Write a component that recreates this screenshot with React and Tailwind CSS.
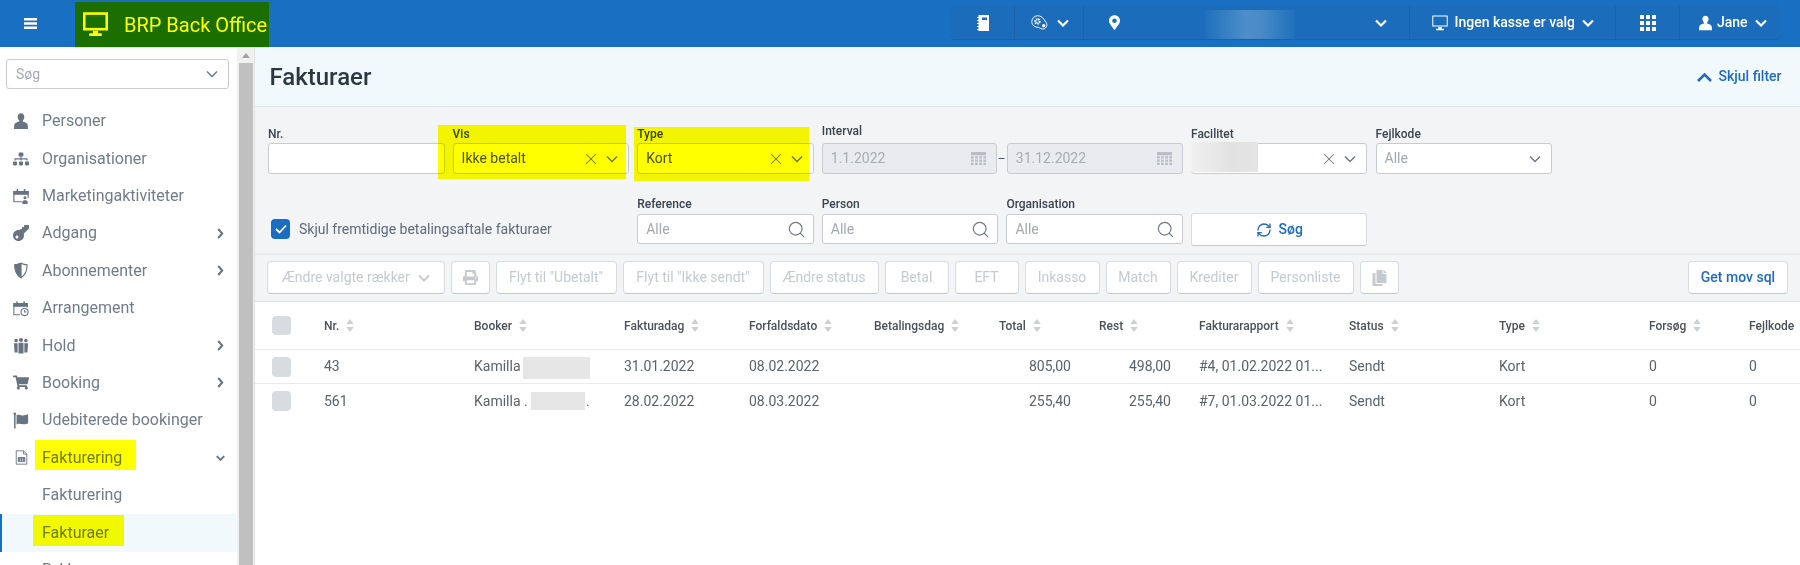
import React from "react";
import { X, Search, RefreshCw } from "lucide-react";
import { FaSitemap, FaKey, FaShoppingCart, FaPrint, FaCopy, FaMapMarkerAlt } from "react-icons/fa";

const ChevD = ({ className = "", sw = 1.500 }) => (
  <svg viewBox="0 0 12 8" className={`w-[12px] h-[8px] shrink-0 ${className}`} fill="none" stroke="currentColor" strokeWidth={sw}><path d="M1 1.500l5 5 5-5" /></svg>
);
const ChevR = ({ className = "" }) => (
  <svg viewBox="0 0 7 11" className={`w-[7px] h-[11px] shrink-0 ${className}`} fill="none" stroke="currentColor" strokeWidth="2"><path d="M1.200 1l4 4.500-4 4.500" /></svg>
);
const IconUser = ({ className }) => (
  <svg viewBox="0 0 16 18" className={className} fill="currentColor"><path d="M8 0c2.400 0 3.800 1.800 3.800 4.200 0 1.800-.7 3.300-1.800 4.200v1.300c2.600.7 5.200 1.700 5.700 3.600L16 18H0l.3-4.700c.5-1.900 3.100-2.900 5.700-3.600V8.400C4.900 7.500 4.200 6 4.200 4.200 4.200 1.800 5.600 0 8 0z" /></svg>
);
const IconCalPerson = ({ className }) => (
  <svg viewBox="0 0 18 18" className={className} fill="none" stroke="currentColor" strokeWidth="1.300"><path d="M10 15.500H1V4h16v7" /><path d="M1 4h16v3H1z" fill="currentColor" /><path d="M5 1v4M13 1v4" strokeWidth="1.800" /><circle cx="13.500" cy="11" r="1.700" fill="currentColor" stroke="none" /><path d="M10.500 18v-2.500c0-1 1.500-1.700 3-1.700s3 .7 3 1.700V18z" fill="currentColor" stroke="none" /></svg>
);
const IconCalClock = ({ className }) => (
  <svg viewBox="0 0 18 18" className={className} fill="none" stroke="currentColor" strokeWidth="1.200"><path d="M8 16H1V3.500h15V8" /><path d="M1 3.500h15v3H1z" fill="currentColor" /><path d="M4.500 1v4M12.500 1v4" strokeWidth="1.800" /><circle cx="13" cy="13" r="4" fill="#fff" /><path d="M13 10.800V13h2" /></svg>
);
const IconShield = ({ className }) => (
  <svg viewBox="0 0 16 18" className={className} fill="none" stroke="currentColor" strokeWidth="1.300"><path d="M1 2.500C3.500 2.500 6 1.800 8 .8c2 1 4.500 1.700 7 1.700 0 7-1.500 11.500-7 14.700C2.500 14 1 9.500 1 2.500z" /><path d="M1 2.500C3.500 2.500 6 1.800 8 .8v16.400C2.500 14 1 9.500 1 2.500z" fill="currentColor" /></svg>
);
const IconTeam = ({ className }) => (
  <svg viewBox="0 0 18 18" className={className} fill="currentColor"><circle cx="3.500" cy="3.500" r="2" /><circle cx="9" cy="2.800" r="2.300" /><circle cx="14.500" cy="3.500" r="2" /><path d="M1 6.500h4.200V17H1.800zM6.200 6h5.600v12H6.200zM12.800 6.500H17l-.8 10.500h-3.400z" /></svg>
);
const IconFlag = ({ className }) => (
  <svg viewBox="0 0 18 18" className={className} fill="currentColor"><path d="M1.200 1h1.700v17H1.200z" /><circle cx="2" cy="1.500" r="1.500" /><path d="M4 3c3-1.500 5.500 1 9 .2 1.500-.3 3-.8 4-1.200v10c-1 .6-2.500 1-4 1.200-3.500.5-6-1.500-9 .2z" /></svg>
);
const IconInvoice = ({ className }) => (
  <svg viewBox="0 0 16 18" className={className} fill="none" stroke="currentColor" strokeWidth="1.100"><path d="M1.500.8h9l4 4v12.400h-13z" /><path d="M10.500.8v4h4" /><path d="M4 9h8v5H4z" fill="currentColor" /><path d="M6.500 10v4M9.500 10v4" stroke="#fff" strokeWidth=".8" /></svg>
);
const IconCalendarGrid = () => (
  <svg viewBox="0 0 14 14" className="w-[15px] h-[15px] text-[#b8bdc3]" fill="currentColor"><path d="M0 1h14v3H0z" /><path d="M0 5h2.500v2H0zM3.800 5h2.500v2H3.800zM7.700 5h2.500v2H7.700zM11.500 5H14v2h-2.500zM0 8h2.500v2H0zM3.800 8h2.500v2H3.800zM7.700 8h2.500v2H7.700zM11.500 8H14v2h-2.500zM0 11h2.500v2H0zM3.800 11h2.500v2H3.800zM7.700 11h2.500v2H7.700zM11.500 11H14v2h-2.500z" /></svg>
);
const IconMonitor = ({ className, strokeW = 1.500 }) => (
  <svg viewBox="0 0 24 24" className={className} fill="none"><rect x="1.200" y="1.500" width="21.600" height="15" stroke="currentColor" strokeWidth={strokeW} /><path d="M9.500 18h5v2.500h3.500V23H6v-2.500h3.500z" fill="currentColor" /></svg>
);
const IconNotebook = ({ className }) => (
  <svg viewBox="0 0 12 16" className={className} fill="currentColor"><path d="M1.500 0H12v16H1.500z" /><path d="M0 2h2v1H0zM0 5h2v1H0zM0 8h2v1H0zM0 11h2v1H0zM0 14h2v1H0z" /><path d="M5 2.500h5V5H5z" fill="#1a70c0" /></svg>
);
const IconGears = ({ className }) => (
  <svg viewBox="0 0 18 16" className={className} fill="none" stroke="currentColor"><path d="M7 .8c2.700 0 4.800 1.300 6.600 3.600l2.700 4c1.300 2.300.2 5.800-2.800 6.500-2.400.5-4-1-5.300-1.700C3.500 13 .8 10.600.8 7 .8 3.600 3.500.8 7 .8z" strokeWidth="1" /><circle cx="6.800" cy="6.800" r="2.300" strokeWidth="2.300" strokeDasharray="1.400 .7" /><circle cx="13.500" cy="11.500" r="1.800" fill="currentColor" stroke="none" /></svg>
);
const IconGrid = ({ className }) => (
  <svg viewBox="0 0 16 16" className={className} fill="currentColor"><path d="M0 0h4v4H0zM6 0h4v4H6zM12 0h4v4h-4zM0 6h4v4H0zM6 6h4v4H6zM12 6h4v4h-4zM0 12h4v4H0zM6 12h4v4H6zM12 12h4v4h-4z" /></svg>
);
const SortIcon = () => (
  <svg viewBox="0 0 8 14" className="w-[8px] h-[13px] text-[#ccd0d6] ml-[7px] shrink-0" fill="currentColor"><path d="M4 0l4 5.500H0zM4 14l4-5.500H0z" /></svg>
);

const nav = [
  ["Personer", <IconUser className="w-[14px] h-[16px]" />, false],
  ["Organisationer", <FaSitemap className="w-[16px] h-[16px]" />, false],
  ["Marketingaktiviteter", <IconCalPerson className="w-[16px] h-[16px]" />, false],
  ["Adgang", <FaKey className="w-[16px] h-[16px] rotate-180" />, true],
  ["Abonnementer", <IconShield className="w-[14px] h-[17px]" />, true],
  ["Arrangement", <IconCalClock className="w-[16px] h-[17px]" />, false],
  ["Hold", <IconTeam className="w-[16px] h-[17px]" />, true],
  ["Booking", <FaShoppingCart className="w-[16px] h-[15px]" />, true],
  ["Udebiterede bookinger", <IconFlag className="w-[16px] h-[17px]" />, false],
];

const Label = ({ children, className = "" }) => (
  <div className={`h-[19px] text-[12px] font-medium text-[#3a4450] ${className}`}>{children}</div>
);

const Box = ({ children, className = "" }) => (
  <div className={`border border-[#c8ccd2] rounded-[3px] bg-white flex items-center text-[14px] pl-[8px] pr-[10px] ${className}`}>{children}</div>
);

const Chev = () => <ChevD className="ml-auto text-[#6e7884]" />;
const Clear = () => <X className="w-[18px] h-[18px] text-[#6e7884] shrink-0" strokeWidth={1.400} />;
const Find = () => <Search className="w-[19px] h-[19px] ml-auto mr-[-3px] text-[#6e7884]" strokeWidth={1.500} />;

const Btn = ({ children, className = "" }) => (
  <div className={`h-[33px] border border-[#d8dbe0] border-b-[#c3c7cd] rounded-[4px] bg-white flex items-center justify-center text-[14px] text-[#c5cad1] shrink-0 ${className}`}>{children}</div>
);

const gridCols = "grid grid-cols-[69px_150px_150px_125px_125px_125px_100px_100px_150px_150px_150px_100px_1fr] items-center";

const headers = ["Nr.", "Booker", "Fakturadag", "Forfaldsdato", "Betalingsdag", "Total", "Rest", "Fakturarapport", "Status", "Type", "Forsøg", "Fejlkode"];

const Row = ({ nr, name, d1, d2, total, rest, rapport, last }) => (
  <div className={`${gridCols} h-[34px] text-[14px] text-[#5b626a] ${last ? "" : "border-b border-[#e8eaed]"}`}>
    <div className="pl-[17px]"><div className="w-[19px] h-[20px] rounded-[4px] bg-[#d8dce1]" /></div>
    <div>{nr}</div>
    <div className="whitespace-nowrap relative">{name}</div>
    <div>{d1}</div>
    <div>{d2}</div>
    <div />
    <div className="text-right pr-[28px]">{total}</div>
    <div className="text-right pr-[28px]">{rest}</div>
    <div className="whitespace-nowrap">{rapport}</div>
    <div>Sendt</div>
    <div>Kort</div>
    <div>0</div>
    <div>0</div>
  </div>
);

const Blur = ({ className }) => <span className={`absolute bg-[#e6e6e6] ${className}`} />;

export default function App() {
  return (
    <div className="w-[1800px] h-[565px] overflow-hidden flex flex-col bg-white font-['Roboto',sans-serif]">
      <header className="h-[47px] shrink-0 bg-[#1970c2] flex items-center relative z-10 text-white">
        <div className="w-[75px] h-full flex items-center pl-[24px]">
          <svg viewBox="0 0 13 11" className="w-[13px] h-[11px]" fill="currentColor"><path d="M0 0h13v2.400H0zM0 4.300h13v2.400H0zM0 8.600h13V11H0z" /></svg>
        </div>
        <div className="w-[194px] h-[45px] mt-[2px] bg-[#1a6f00] shadow-[0_1px_0_#e8f25a] flex items-center pl-[7.500px] text-[#ffff00]">
          <IconMonitor className="w-[25px] h-[25px]" strokeW={2.500} />
          <span className="ml-[16.500px] text-[20px] leading-none whitespace-nowrap">BRP Back Office</span>
        </div>
        <div className="ml-auto mr-[20px] h-[33.500px] mt-[-1px] flex text-[14px] font-medium rounded-[4px] border-b border-[#1862aa]">
          <div className="w-[64px] flex items-center justify-center bg-[#1b6cba] border-r border-[#1862aa] rounded-l-[4px]">
            <IconNotebook className="w-[12px] h-[16px]" />
          </div>
          <div className="w-[69px] flex items-center pl-[16px] bg-[#1b6cba] border-r border-[#1862aa]">
            <IconGears className="w-[17px] h-[15px]" />
            <ChevD className="ml-[9px]" sw={2.200} />
          </div>
          <div className="w-[326px] relative flex items-center pl-[25px] bg-[#1b6cba] border-r border-[#1862aa]">
            <FaMapMarkerAlt className="w-[11px] h-[15px]" />
            <span className="absolute left-[121px] top-[4px] w-[90px] h-[29px] bg-[linear-gradient(90deg,#1f70bc,#4c8ec9_45%,#4a8cc8_60%,#1f70bc)]" />
            <ChevD className="absolute left-[291px] top-[13px]" sw={2.200} />
          </div>
          <div className="w-[206px] flex items-center pl-[22px] bg-[#1b6cba] border-r border-[#1862aa]">
            <IconMonitor className="w-[16px] h-[16px] shrink-0" />
            <span className="ml-[6.500px] w-[119px] overflow-hidden whitespace-nowrap">Ingen kasse er valgt</span>
            <ChevD className="ml-[8px]" sw={2.200} />
          </div>
          <div className="w-[64px] flex items-center justify-center bg-[#1b6cba] border-r border-[#1862aa]">
            <IconGrid className="w-[16px] h-[16px]" />
          </div>
          <div className="w-[100px] flex items-center pl-[19px] bg-[#1b6cba] rounded-r-[4px]">
            <IconUser className="w-[13px] h-[16px]" />
            <span className="ml-[5px]">Jane</span>
            <ChevD className="ml-[7px]" sw={2.200} />
          </div>
        </div>
      </header>

      <div className="flex flex-1 min-h-0">
        <aside className="w-[237px] shrink-0 pt-[12px] overflow-hidden">
          <div className="ml-[6px] w-[222.500px] h-[30px] border border-[#c8ccd2] rounded-[3px] flex items-center pl-[9px] pr-[10px] text-[14px] text-[#a3a8ae]">
            Søg
            <Chev />
          </div>
          <nav className="mt-[13.500px] text-[16px] text-[#717c89]">
            {nav.map(([label, icon, arrow]) => (
              <div key={label} className="h-[37.400px] flex items-center">
                <span className="w-[42px] flex justify-center text-[#687482]">{icon}</span>
                <span>{label}</span>
                {arrow && <ChevR className="ml-auto mr-[13.500px] text-[#687482]" />}
              </div>
            ))}
            <div className="h-[37.400px] flex items-center">
              <span className="w-[42px] flex justify-center text-[#687482]"><IconInvoice className="w-[13px] h-[17px]" /></span>
              <span className="relative">
                Fakturering
                <span className="absolute left-[-7px] top-[-6px] w-[101px] h-[30px] bg-[#ffff00] mix-blend-multiply" />
              </span>
              <ChevD className="ml-auto mr-[12px] text-[#687482] !w-[9px] !h-[6px]" sw={2.500} />
            </div>
            <div className="h-[37.400px] flex items-center pl-[42px]">Fakturering</div>
            <div className="h-[38px] flex items-center pl-[40px] bg-[#f1f9fd] border-l-2 border-[#1970c2]">
              <span className="relative">
                Fakturaer
                <span className="absolute left-[-9px] top-[-6px] w-[91px] h-[31px] bg-[#ffff00] mix-blend-multiply" />
              </span>
            </div>
            <div className="h-[37.400px] flex items-center pl-[42px]">Rykker</div>
          </nav>
        </aside>

        <div className="w-[17px] shrink-0 bg-[#f1f1f1] flex flex-col pl-[2px] pr-[1.500px]">
          <div className="h-[16px] flex items-center justify-center">
            <svg viewBox="0 0 8 5" className="w-[8px] h-[5px] text-[#a3a3a3]" fill="currentColor"><path d="M4 0l4 5H0z" /></svg>
          </div>
          <div className="flex-1 bg-[#c0c0c0]" />
        </div>

        <main className="flex-1 min-w-0 border-l border-[#e0e3e6] overflow-hidden flex flex-col">
          <div className="h-[60px] shrink-0 bg-[#f1f9fd] border-b border-[#dfe5ea] flex items-center justify-between pl-[14.500px] pr-[18.500px]">
            <h1 className="text-[24px] font-medium text-[#2d3742]">Fakturaer</h1>
            <div className="flex items-center text-[14px] font-medium text-[#1f6bbc]">
              <svg viewBox="0 0 15 10" className="w-[15px] h-[10px] mr-[7px]" fill="none" stroke="currentColor" strokeWidth="2.600"><path d="M1 9l6.500-6.500L14 9" /></svg>
              Skjul filter
            </div>
          </div>

          <section className="h-[148px] shrink-0 bg-[#f3f4f6] border-b-2 border-[#e8eaec] pt-[17px] pl-[13px] grid grid-cols-[repeat(7,176.500px)] gap-x-[8.100px] content-start text-[#a3a8ae]">
            <div>
              <Label className="leading-[21px]">Nr.</Label>
              <Box className="h-[31px]" />
            </div>
            <div className="relative">
              <Label className="leading-[21px]">Vis</Label>
              <Box className="h-[31px] text-[#4a5159]">
                Ikke betalt
                <span className="ml-auto mr-[6px]"><Clear /></span>
                <ChevD className="text-[#6e7884]" />
              </Box>
              <span className="absolute left-[-14.500px] top-[1px] w-[188px] h-[54px] bg-[#ffff00] mix-blend-multiply" />
            </div>
            <div className="relative">
              <Label className="leading-[21px]">Type</Label>
              <Box className="h-[31px] text-[#4a5159]">
                Kort
                <span className="ml-auto mr-[6px]"><Clear /></span>
                <ChevD className="text-[#6e7884]" />
              </Box>
              <span className="absolute left-[-3px] top-[3px] w-[175px] h-[54px] bg-[#ffff00] mix-blend-multiply" />
            </div>
            <div className="col-span-2">
              <Label className="mt-[-2px] mb-[2px] leading-[19px]">Interval</Label>
              <div className="flex items-center">
                <Box className="h-[31px] w-[175px] !bg-[#e9ebee] text-[#a8adb4]">1.1.2022<span className="ml-auto"><IconCalendarGrid /></span></Box>
                <span className="w-[10px] text-center text-[#4a5159] text-[12px]">–</span>
                <Box className="h-[31px] w-[176px] !bg-[#e9ebee] text-[#a8adb4]">31.12.2022<span className="ml-auto"><IconCalendarGrid /></span></Box>
              </div>
            </div>
            <div className="relative">
              <Label className="leading-[21px]">Facilitet</Label>
              <Box className="h-[31px]">
                <span className="ml-auto mr-[6px]"><Clear /></span>
                <ChevD className="text-[#6e7884]" />
              </Box>
              <Blur className="left-0 top-[18px] w-[67px] h-[30px] bg-[linear-gradient(90deg,#f0f0f0,#e2e2e2_60%,#e4e4e4)]" />
            </div>
            <div>
              <Label className="leading-[21px]">Fejlkode</Label>
              <Box className="h-[31px]">Alle<Chev /></Box>
            </div>

            <div className="col-span-2 mt-[40px] h-[30px] flex items-center pl-[3px] text-[14px] text-[#5f6b78] whitespace-nowrap">
              <span className="w-[19px] h-[20px] rounded-[4px] bg-[#1a6dc0] flex items-center justify-center mr-[9px]">
                <svg viewBox="0 0 12 10" className="w-[12px] h-[10px]" fill="none" stroke="#fff" strokeWidth="1.800"><path d="M1 5l3.500 3.500L11 1.500" /></svg>
              </span>
              Skjul fremtidige betalingsaftale fakturaer
            </div>
            <div className="mt-[21px]">
              <Label className="leading-[19px]">Reference</Label>
              <Box className="h-[30px]">Alle<Find /></Box>
            </div>
            <div className="mt-[21px]">
              <Label className="leading-[19px]">Person</Label>
              <Box className="h-[30px]">Alle<Find /></Box>
            </div>
            <div className="mt-[21px]">
              <Label className="leading-[19px]">Organisation</Label>
              <Box className="h-[30px]">Alle<Find /></Box>
            </div>
            <div className="mt-[39px]">
              <div className="h-[33px] border border-[#d8dbe0] border-b-[#c3c7cd] rounded-[3px] bg-white flex items-center justify-center text-[14px] font-medium text-[#1f6bbc]">
                <RefreshCw className="w-[16px] h-[16px] mr-[7px]" strokeWidth={2} />
                Søg
              </div>
            </div>
          </section>

          <div className="h-[47px] shrink-0 bg-[#f3f4f6] border-b border-[#dfe2e6] pt-[6px] pl-[12px] pr-[12px] flex gap-[6px]">
            <Btn className="w-[177.500px]">Ændre valgte rækker<ChevD className="ml-[8px]" sw={2} /></Btn>
            <Btn className="w-[39px]"><FaPrint className="w-[15px] h-[15px]" /></Btn>
            <Btn className="w-[121px]">Flyt til "Ubetalt"</Btn>
            <Btn className="w-[141px]">Flyt til "Ikke sendt"</Btn>
            <Btn className="w-[109px]">Ændre status</Btn>
            <Btn className="w-[64px]">Betal</Btn>
            <Btn className="w-[64px]">EFT</Btn>
            <Btn className="w-[75px]">Inkasso</Btn>
            <Btn className="w-[65px]">Match</Btn>
            <Btn className="w-[75px]">Krediter</Btn>
            <Btn className="w-[96px]">Personliste</Btn>
            <Btn className="w-[39px]"><FaCopy className="w-[15px] h-[16px]" /></Btn>
            <Btn className="w-[100px] ml-auto !text-[#1f6bbc] font-medium">Get mov sql</Btn>
          </div>

          <div className={`${gridCols} h-[48px] shrink-0 border-b border-[#e8eaed] text-[12px] font-medium text-[#4a5159]`}>
            <div className="pl-[17px]"><div className="w-[19px] h-[19px] rounded-[4px] bg-[#d8dce1]" /></div>
            {headers.map((h) => (
              <div key={h} className="flex items-center whitespace-nowrap">
                {h}
                {h !== "Fejlkode" && <SortIcon />}
              </div>
            ))}
          </div>
          <Row nr="43" d1="31.01.2022" d2="08.02.2022" total="805,00" rest="498,00" rapport="#4, 01.02.2022 01..."
            name={<>Kamilla<Blur className="left-[49px] top-[1px] w-[67px] h-[22px]" /></>} />
          <Row last nr="561" d1="28.02.2022" d2="08.03.2022" total="255,40" rest="255,40" rapport="#7, 01.03.2022 01..."
            name={<>Kamilla .<Blur className="left-[57px] top-[1px] w-[54px] h-[18px]" /><span className="absolute left-[112px]">.</span></>} />
        </main>
      </div>
    </div>
  );
}
